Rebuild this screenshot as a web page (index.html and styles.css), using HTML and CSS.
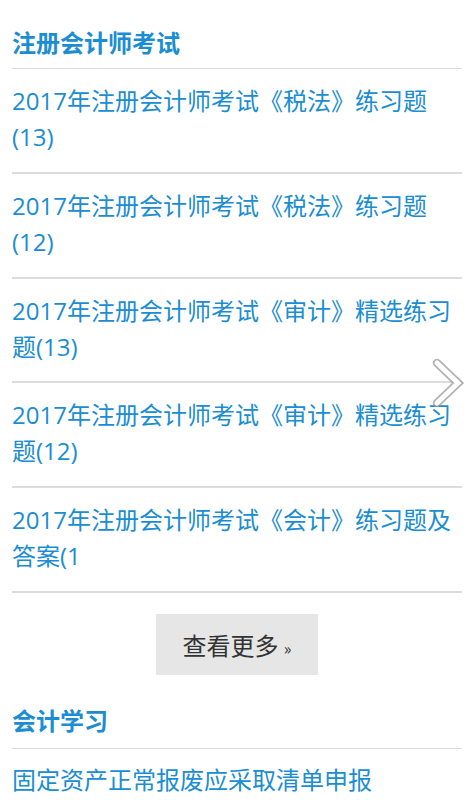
FILE: index.html
```html
<!DOCTYPE html>
<html lang="zh-CN">
<head>
<meta charset="utf-8">
<link rel="stylesheet" href="styles.css">
</head>
<body>
<div class="page">
  <section class="block">
    <h2 class="title">注册会计师考试</h2>
    <ul class="list">
      <li class="item">2017年注册会计师考试《税法》练习题(13)</li>
      <li class="item">2017年注册会计师考试《税法》练习题(12)</li>
      <li class="item">2017年注册会计师考试《审计》精选练习题(13)</li>
      <li class="item">2017年注册会计师考试《审计》精选练习题(12)</li>
      <li class="item">2017年注册会计师考试《会计》练习题及答案(1</li>
    </ul>
    <div class="more-wrap"><span class="more">查看更多 <span class="raquo">»</span></span></div>
  </section>
  <section class="block">
    <h2 class="title title2">会计学习</h2>
    <ul class="list">
      <li class="item">固定资产正常报废应采取清单申报</li>
    </ul>
  </section>
</div>
<svg class="next" width="34" height="50" viewBox="0 0 34 50">
  <polyline points="5,4 26,24 5,44" fill="none" stroke="#9a9a9a" stroke-width="8.5" stroke-linejoin="miter" stroke-linecap="round" opacity="0.75"/>
  <polyline points="5,4 26,24 5,44" fill="none" stroke="#ffffff" stroke-width="5" stroke-linejoin="miter" stroke-linecap="round"/>
</svg>
</body>
</html>
```

FILE: styles.css
```css
html, body {
  margin: 0;
  padding: 0;
  background: #fff;
}
body {
  font-family: "Open Sans", "Noto Sans CJK SC", sans-serif;
  position: relative;
  width: 473px;
  height: 800px;
  overflow: hidden;
}
.page {
  padding: 0 11px 0 12px;
}
.title {
  margin: 0;
  padding: 26px 0 10px;
  font-family: "Noto Sans CJK SC", sans-serif;
  font-size: 24px;
  line-height: 32px;
  font-weight: bold;
  color: #1a8dd3;
  border-bottom: 1px solid #dcdcdc;
}
.title2 {
  padding-top: 0;
  padding-bottom: 12px;
}
.list {
  list-style: none;
  margin: 0;
  padding: 0;
}
.item {
  padding: 14px 0 16.8px;
  font-size: 24px;
  line-height: 36px;
  color: #1a8dd3;
  border-bottom: 2px solid #dcdcdc;
}
.block:last-child .item {
  padding-top: 13px;
  border-bottom: none;
}
.more-wrap {
  display: flex;
  justify-content: center;
  padding: 21px 0 29px;
}
.more {
  display: block;
  width: 162px;
  height: 61px;
  line-height: 61px;
  text-align: center;
  background: #e6e6e6;
  color: #333;
  font-size: 24px;
  font-family: "Noto Sans CJK SC", sans-serif;
}
.raquo {
  font-size: 16px;
}
.next {
  position: absolute;
  left: 432px;
  top: 359px;
}
```
